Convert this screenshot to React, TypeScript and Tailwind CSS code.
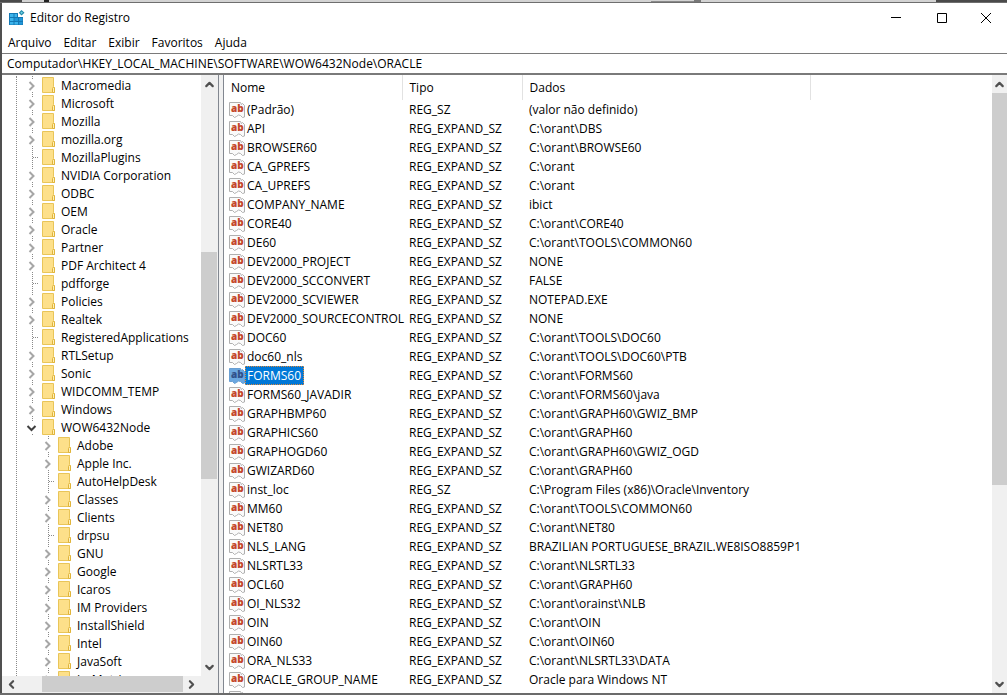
import { ChevronDown, ChevronLeft, ChevronRight, ChevronUp } from "lucide-react";

type TreeNode = { name: string; kind: "closed" | "open" | "leaf"; child?: boolean };

const closed = (name: string, child = false): TreeNode => ({ name, kind: "closed", child });
const leaf = (name: string, child = false): TreeNode => ({ name, kind: "leaf", child });

const tree: TreeNode[] = [
  closed("Macromedia"),
  closed("Microsoft"),
  closed("Mozilla"),
  closed("mozilla.org"),
  leaf("MozillaPlugins"),
  closed("NVIDIA Corporation"),
  closed("ODBC"),
  closed("OEM"),
  closed("Oracle"),
  closed("Partner"),
  closed("PDF Architect 4"),
  leaf("pdfforge"),
  closed("Policies"),
  closed("Realtek"),
  leaf("RegisteredApplications"),
  closed("RTLSetup"),
  closed("Sonic"),
  closed("WIDCOMM_TEMP"),
  closed("Windows"),
  { name: "WOW6432Node", kind: "open" },
  closed("Adobe", true),
  closed("Apple Inc.", true),
  leaf("AutoHelpDesk", true),
  closed("Classes", true),
  closed("Clients", true),
  leaf("drpsu", true),
  closed("GNU", true),
  closed("Google", true),
  closed("Icaros", true),
  closed("IM Providers", true),
  closed("InstallShield", true),
  closed("Intel", true),
  closed("JavaSoft", true),
  closed("JreMetrics", true),
];

const values = [
  ["(Padrão)", "REG_SZ", "(valor não definido)"],
  ["API", "REG_EXPAND_SZ", "C:\\orant\\DBS"],
  ["BROWSER60", "REG_EXPAND_SZ", "C:\\orant\\BROWSE60"],
  ["CA_GPREFS", "REG_EXPAND_SZ", "C:\\orant"],
  ["CA_UPREFS", "REG_EXPAND_SZ", "C:\\orant"],
  ["COMPANY_NAME", "REG_EXPAND_SZ", "ibict"],
  ["CORE40", "REG_EXPAND_SZ", "C:\\orant\\CORE40"],
  ["DE60", "REG_EXPAND_SZ", "C:\\orant\\TOOLS\\COMMON60"],
  ["DEV2000_PROJECT", "REG_EXPAND_SZ", "NONE"],
  ["DEV2000_SCCONVERT", "REG_EXPAND_SZ", "FALSE"],
  ["DEV2000_SCVIEWER", "REG_EXPAND_SZ", "NOTEPAD.EXE"],
  ["DEV2000_SOURCECONTROL", "REG_EXPAND_SZ", "NONE"],
  ["DOC60", "REG_EXPAND_SZ", "C:\\orant\\TOOLS\\DOC60"],
  ["doc60_nls", "REG_EXPAND_SZ", "C:\\orant\\TOOLS\\DOC60\\PTB"],
  ["FORMS60", "REG_EXPAND_SZ", "C:\\orant\\FORMS60"],
  ["FORMS60_JAVADIR", "REG_EXPAND_SZ", "C:\\orant\\FORMS60\\java"],
  ["GRAPHBMP60", "REG_EXPAND_SZ", "C:\\orant\\GRAPH60\\GWIZ_BMP"],
  ["GRAPHICS60", "REG_EXPAND_SZ", "C:\\orant\\GRAPH60"],
  ["GRAPHOGD60", "REG_EXPAND_SZ", "C:\\orant\\GRAPH60\\GWIZ_OGD"],
  ["GWIZARD60", "REG_EXPAND_SZ", "C:\\orant\\GRAPH60"],
  ["inst_loc", "REG_SZ", "C:\\Program Files (x86)\\Oracle\\Inventory"],
  ["MM60", "REG_EXPAND_SZ", "C:\\orant\\TOOLS\\COMMON60"],
  ["NET80", "REG_EXPAND_SZ", "C:\\orant\\NET80"],
  ["NLS_LANG", "REG_EXPAND_SZ", "BRAZILIAN PORTUGUESE_BRAZIL.WE8ISO8859P1"],
  ["NLSRTL33", "REG_EXPAND_SZ", "C:\\orant\\NLSRTL33"],
  ["OCL60", "REG_EXPAND_SZ", "C:\\orant\\GRAPH60"],
  ["OI_NLS32", "REG_EXPAND_SZ", "C:\\orant\\orainst\\NLB"],
  ["OIN", "REG_EXPAND_SZ", "C:\\orant\\OIN"],
  ["OIN60", "REG_EXPAND_SZ", "C:\\orant\\OIN60"],
  ["ORA_NLS33", "REG_EXPAND_SZ", "C:\\orant\\NLSRTL33\\DATA"],
  ["ORACLE_GROUP_NAME", "REG_EXPAND_SZ", "Oracle para Windows NT"],
];

const selected = "FORMS60";

function RegistryIcon() {
  return (
    <svg width="16" height="16" viewBox="0 0 16 16" aria-hidden="true">
      <path d="M0 3h9v4h5v8H0z" fill="#1478b4" />
      <path d="M1 4h3.500v3H1zM5.500 4H8v3H5.500zM1 8h3.500v3H1zM1 12h3.500v2.500H1zM5.500 12H9v2.500H5.500z" fill="#3cb4ec" />
      <path d="M5.500 8H9v3H5.500zM10 8h3.500v3H10zM10 12h3.500v2.500H10z" fill="#2196d8" />
      <path d="M12.500 0L15.500 2.700L12.500 5.500L9.800 2.700z" fill="#1f87a8" />
      <path d="M12.500 1.500L14 2.700L12.500 4L11.300 2.700z" fill="#6fd0e4" />
    </svg>
  );
}

function FolderIcon() {
  return (
    <svg width="14" height="16" viewBox="0 0 14 16" className="shrink-0" aria-hidden="true">
      <path d="M0.500 0.500h11v9l1 1v5H0.500z" fill="#fde08a" stroke="#e9c558" />
      <path d="M10.500 15.500v-4l1-1.500 1 1v4.500z" fill="#fff0b8" stroke="#e0b43a" />
    </svg>
  );
}

function StringIcon({ active = false }: { active?: boolean }) {
  return (
    <svg width="16" height="16" viewBox="0 0 16 16" className="shrink-0 overflow-visible" aria-hidden="true">
      <path
        d="M0.500 0.500H11.500L12.500 2.500L13.500 1.500L15.500 3.500V15L13.500 15.500L11.500 13.500L9.500 13L7.500 14.500L5.500 15.500L3.500 13.500L0.500 13.500z"
        fill={active ? "#6ba7e0" : "#fafafa"}
        stroke={active ? "#6a9fd2" : "#b0b0b0"}
      />
      <text x="2" y="10" fontSize="10" fontWeight="800" fontFamily="Open Sans, sans-serif" fill={active ? "#31518c" : "#c4472b"}>
        ab
      </text>
    </svg>
  );
}

function TreeRow({ node }: { node: TreeNode }) {
  return (
    <li className={`flex h-[18px] shrink-0 items-center ${node.child ? "pl-[38px]" : "pl-[22px]"}`}>
      <span className="flex h-full w-[18px] shrink-0 items-center">
        {node.kind === "leaf" ? (
          <svg width="18" height="18" viewBox="0 0 18 18" stroke="#8a8a8a" strokeDasharray="1 1" aria-hidden="true">
            <path d="M8.500 0v18M9 9.500h6" />
          </svg>
        ) : (
          <button className="h-full w-full" aria-label={`${node.kind === "open" ? "Recolher" : "Expandir"} ${node.name}`}>
            <svg width="18" height="18" viewBox="0 0 18 18" fill="none" aria-hidden="true">
              <path d="M8.500 0v3M8.500 16v2" stroke="#8a8a8a" strokeDasharray="1 1" />
              {node.kind === "open" ? (
                <path d="M3.500 8l4 4 4-4" stroke="#404040" strokeWidth="2" />
              ) : (
                <path d="M5.500 6l4 4-4 4" stroke="#a6a6a6" strokeWidth="2" />
              )}
            </svg>
          </button>
        )}
      </span>
      <FolderIcon />
      <span className="ml-[5px] whitespace-nowrap pt-[2px]">{node.name}</span>
    </li>
  );
}

export default function App() {
  return (
    <div className="flex h-screen flex-col overflow-hidden border-b-2 border-[#6b6b6b] bg-white font-['Open_Sans',sans-serif] text-[12px] leading-4 text-black">
      {/* Strip of the window behind */}
      <div className="flex h-[3px] shrink-0 border-b border-[#6e6e6e] bg-[#d3d3d3]">
        <div className="w-[22px] bg-[#4a4a4a]" />
        <div className="ml-[22px] w-[5px] bg-[#222222]" />
        <div className="ml-auto w-[43px] border-b border-[#8a8a8a]" />
        <div className="mr-[235px] w-[7px] bg-[#777777]" />
        <div className="w-[71px] bg-[#4a4a4a]" />
      </div>

      <div className="flex min-h-0 flex-1 flex-col border-l-2 border-[#505050]">
        {/* Title bar */}
        <header className="flex h-[30px] shrink-0 items-center pl-[7px]">
          <RegistryIcon />
          <h1 className="ml-[5px]">Editor do Registro</h1>
          <div className="ml-auto flex h-full">
            <button className="flex w-[46px] items-center justify-center" aria-label="Minimizar">
              <svg width="10" height="10" stroke="#000"><path d="M0 4.500h10" /></svg>
            </button>
            <button className="flex w-[46px] items-center justify-center" aria-label="Maximizar">
              <svg width="10" height="10" fill="none" stroke="#000"><path d="M0.500 0.500h9v9h-9z" /></svg>
            </button>
            <button className="flex w-[42px] items-center justify-center" aria-label="Fechar">
              <svg width="10" height="10" stroke="#000"><path d="M0 0l10 10M10 0L0 10" /></svg>
            </button>
          </div>
        </header>

        {/* Menu */}
        <nav className="flex h-5 shrink-0 items-center gap-3 pl-[6px]">
          <button>Arquivo</button>
          <button>Editar</button>
          <button>Exibir</button>
          <button>Favoritos</button>
          <button>Ajuda</button>
        </nav>

        <input
          aria-label="Caminho"
          className="h-[22px] w-full shrink-0 border-t border-b-2 border-[#7a7a7a] pl-[5px] outline-none"
          defaultValue="Computador\HKEY_LOCAL_MACHINE\SOFTWARE\WOW6432Node\ORACLE"
        />

        <div className="flex min-h-0 flex-1 bg-[#f0f0f0]">
          {/* Key tree */}
          <aside className="flex w-[217px] shrink-0 flex-col border-r border-[#828790]">
            <div className="flex min-h-0 flex-1">
              <div className="flex min-w-0 flex-1 overflow-hidden bg-white pt-[1px]">
                <ul className="relative flex w-full flex-col">
                  <li className="absolute inset-y-0 left-[14px] border-l border-dotted border-[#8a8a8a]" aria-hidden="true" />
                  {tree.map((node) => (
                    <TreeRow key={node.name} node={node} />
                  ))}
                </ul>
              </div>
              <div className="flex w-[17px] flex-col pr-[1px]">
                <button className="flex h-[19px] items-center justify-center" aria-label="Rolar para cima">
                  <ChevronUp size={13} strokeWidth={4} color="#505050" />
                </button>
                <div className="flex flex-1 flex-col">
                  <div className="flex-[159]" />
                  <div className="flex-[227] bg-[#cdcdcd]" />
                  <div className="flex-[180]" />
                </div>
                <button className="flex h-[18px] items-center justify-center" aria-label="Rolar para baixo">
                  <ChevronDown size={13} strokeWidth={4} color="#505050" />
                </button>
              </div>
            </div>
            <div className="flex h-[17px] shrink-0 pr-[18px]">
              <button className="flex w-[18px] items-center justify-center" aria-label="Rolar para a esquerda">
                <ChevronLeft size={13} strokeWidth={4} color="#505050" />
              </button>
              <div className="flex flex-1">
                <div className="w-[22px]" />
                <div className="mb-[1px] flex-1 bg-[#cdcdcd]" />
              </div>
              <button className="flex w-[17px] items-center justify-center" aria-label="Rolar para a direita">
                <ChevronRight size={13} strokeWidth={4} color="#505050" />
              </button>
            </div>
          </aside>

          {/* Values */}
          <main className="ml-1 flex min-w-0 flex-1 border-l border-[#828790] bg-white">
            <div className="min-w-0 flex-1 overflow-hidden">
              <table className="w-full table-fixed border-collapse text-left">
                <thead>
                  <tr className="h-[25px]">
                    <th className="w-[178px] border-r border-[#e2e2e2] p-0 pl-[7px] font-normal">Nome</th>
                    <th className="w-[120px] border-r border-[#e2e2e2] p-0 pl-[7px] font-normal">Tipo</th>
                    <th className="w-[288px] border-r border-[#e2e2e2] p-0 pl-[7px] font-normal">Dados</th>
                    <th className="p-0" />
                  </tr>
                </thead>
                <tbody>
                  {values.map(([name, type, data]) => (
                    <tr key={name} className="h-[19px] whitespace-nowrap">
                      <td className="p-0 pl-[5px]">
                        <div className="flex h-[19px] items-center">
                          <StringIcon active={name === selected} />
                          <span
                            className={
                              name === selected
                                ? "h-[19px] border border-dotted border-[#e08a3c] bg-[#0078d7] pl-[1px] pr-[2px] leading-[18px] text-white"
                                : "pl-[2px]"
                            }
                          >
                            {name}
                          </span>
                        </div>
                      </td>
                      <td className="p-0 pl-[7px]">{type}</td>
                      <td className="p-0 pl-[7px]">{data}</td>
                      <td className="p-0" />
                    </tr>
                  ))}
                  <tr className="h-[19px]" aria-hidden="true">
                    <td className="p-0 pl-[5px]">
                      <StringIcon />
                    </td>
                  </tr>
                </tbody>
              </table>
            </div>
            <div className="flex w-[15px] shrink-0 flex-col bg-[#f0f0f0]">
              <button className="flex h-[18px] items-center justify-center" aria-label="Rolar lista para cima">
                <ChevronUp size={13} strokeWidth={4} color="#505050" />
              </button>
              <div className="flex flex-1 flex-col">
                <div className="flex-[392] bg-[#cdcdcd]" />
                <div className="flex-[190]" />
              </div>
              <button className="flex h-[18px] items-center justify-center" aria-label="Rolar lista para baixo">
                <ChevronDown size={13} strokeWidth={4} color="#505050" />
              </button>
            </div>
          </main>
        </div>
      </div>
    </div>
  );
}
